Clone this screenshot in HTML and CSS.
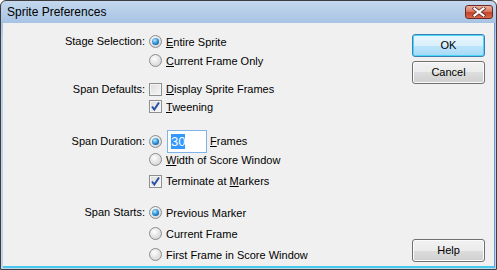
FILE: index.html
```html
<!DOCTYPE html>
<html>
<head>
    <title>Sprite Preferences</title>
    <link rel="stylesheet" href="styles.css">
</head>
<body>
    <div class="window">
        <div class="titlebar">
            <span class="title">Sprite Preferences</span>
            <div class="close">
                <svg width="14" height="10" viewBox="0 0 14 10">
                    <path d="M2.5 1.5 L11.5 8.5 M11.5 1.5 L2.5 8.5" stroke="#5a2a22" stroke-width="3.6" stroke-linecap="square"/>
                    <path d="M2.5 1.5 L11.5 8.5 M11.5 1.5 L2.5 8.5" stroke="#ffffff" stroke-width="2.2" stroke-linecap="square"/>
                </svg>
            </div>
        </div>

        <div class="client">
            <div class="fields">
                <div class="group stage">
                    <div class="label">Stage Selection:</div>
                    <div class="options">
                        <div class="opt h19"><span class="radio on"></span><span><u>E</u>ntire Sprite</span></div>
                        <div class="opt h19"><span class="radio"></span><span><u>C</u>urrent Frame Only</span></div>
                    </div>
                </div>

                <div class="group defaults">
                    <div class="label">Span Defaults:</div>
                    <div class="options">
                        <div class="opt h18"><span class="check"></span><span><u>D</u>isplay Sprite Frames</span></div>
                        <div class="opt h17">
                            <span class="check">
                                <svg width="11" height="11" viewBox="0 0 11 11"><path d="M2 5.5 L4.3 8.5 L9 1.5" fill="none" stroke="#2a4fa8" stroke-width="2"/></svg>
                            </span>
                            <span><u>T</u>weening</span>
                        </div>
                    </div>
                </div>

                <div class="group duration">
                    <div class="label">Span Duration:</div>
                    <div class="options">
                        <div class="opt h22">
                            <span class="radio on"></span>
                            <span class="input"><span class="sel">30</span></span>
                            <span><u>F</u>rames</span>
                        </div>
                        <div class="opt h15"><span class="radio"></span><span><u>W</u>idth of Score Window</span></div>
                        <div class="opt h18 gap5">
                            <span class="check">
                                <svg width="11" height="11" viewBox="0 0 11 11"><path d="M2 5.5 L4.3 8.5 L9 1.5" fill="none" stroke="#2a4fa8" stroke-width="2"/></svg>
                            </span>
                            <span>Terminate at <u>M</u>arkers</span>
                        </div>
                    </div>
                </div>

                <div class="group starts">
                    <div class="label">Span Starts:</div>
                    <div class="options">
                        <div class="opt h21"><span class="radio on"></span><span>Previous Marker</span></div>
                        <div class="opt h21"><span class="radio"></span><span>Current Frame</span></div>
                        <div class="opt h21"><span class="radio"></span><span>First Frame in Score Window</span></div>
                    </div>
                </div>
            </div>

            <div class="buttons">
                <div class="btn default">OK</div>
                <div class="btn">Cancel</div>
                <div class="spacer"></div>
                <div class="btn">Help</div>
            </div>
        </div>
    </div>
</body>
</html>
```

FILE: styles.css
```css
body {
    margin: 0;
    font-family: "Liberation Sans", Arial, sans-serif;
    font-size: 11px;
    color: #000;
    background-color: #fff;
}

.window {
    width: 495px;
    height: 268px;
    border: 1px solid #3d3d3d;
    border-radius: 6px 6px 0 0;
    background: linear-gradient(#c4d8ee, #a7c3e4 22px, #b9d0ea 40px, #bfd5ec);
    display: flex;
    flex-direction: column;
}

.titlebar {
    height: 22px;
    display: flex;
    justify-content: space-between;
    align-items: flex-start;
    padding: 0 3px 0 6px;
}

.title {
    font-size: 12px;
    line-height: 22px;
    color: #000;
}

.close {
    margin-top: 4px;
    width: 28px;
    height: 14px;
    border: 1px solid #6d2a20;
    border-radius: 3px;
    box-sizing: border-box;
    background: linear-gradient(#eab0a2, #d97a63 45%, #c4432b 55%, #d8694c);
    display: flex;
    align-items: center;
    justify-content: center;
}

.client {
    margin: 0 1px 0 2px;
    height: 243px;
    background-color: #f0f0f0;
    border-right: 1px solid #6b9ad0;
    border-bottom: 2px solid #48c8ec;
    display: flex;
}

.fields {
    padding-top: 9px;
}

.group {
    display: flex;
}

.label {
    width: 142px;
    text-align: right;
    line-height: 19px;
    margin-right: 4px;
    white-space: nowrap;
}

.defaults .label { line-height: 18px; }
.duration .label { line-height: 22px; }
.starts .label { line-height: 21px; }

.defaults { margin-top: 10px; }
.duration { margin-top: 15px; }
.starts { margin-top: 12px; }

.opt {
    display: flex;
    align-items: center;
    white-space: nowrap;
}

.h15 { height: 15px; }
.h17 { height: 17px; }
.h18 { height: 18px; }
.h19 { height: 19px; }
.h21 { height: 21px; }
.h22 { height: 22px; }
.gap5 { margin-top: 5px; }

.radio {
    width: 13px;
    height: 13px;
    box-sizing: border-box;
    border: 1px solid #8b8d8f;
    border-radius: 50%;
    background: radial-gradient(circle at 40% 35%, #ffffff, #e6e6e6 45%, #c9cbcd);
    margin-right: 4px;
    display: flex;
    align-items: center;
    justify-content: center;
    flex: none;
}

.radio.on::after {
    content: "";
    width: 7px;
    height: 7px;
    border-radius: 50%;
    background: radial-gradient(circle at 40% 35%, #b9ecff, #2a8fd6 50%, #0a3e7a);
}

.check {
    width: 13px;
    height: 13px;
    box-sizing: border-box;
    border: 1px solid #8e8f8f;
    background: linear-gradient(135deg, #dcdcdc, #f8f8f8);
    box-shadow: inset 0 0 0 1px #f4f4f4;
    margin-right: 4px;
    display: flex;
    align-items: center;
    justify-content: center;
    flex: none;
}

.input {
    width: 40px;
    height: 23px;
    box-sizing: border-box;
    border: 1px solid #7eb4ea;
    background-color: #fff;
    margin-left: 1px;
    margin-right: 3px;
    padding: 4px 0 0 3px;
    font-size: 13px;
    line-height: 14px;
}

.sel {
    background-color: #3399ff;
    color: #fff;
}

.buttons {
    margin-left: auto;
    margin-right: 9px;
    padding: 11px 0 4px;
    width: 73px;
    display: flex;
    flex-direction: column;
    gap: 4px;
}

.spacer {
    flex: 1;
}

.btn {
    height: 23px;
    box-sizing: border-box;
    border: 1px solid #707070;
    border-radius: 3px;
    background: linear-gradient(#f2f2f2, #ebebeb 50%, #dddddd 50%, #cfcfcf);
    box-shadow: inset 0 0 0 1px #fcfcfc;
    text-align: center;
    line-height: 21px;
    font-size: 11px;
}

.btn.default {
    border-color: #3c7fb1;
    background: linear-gradient(#eaf6fd, #d9f0fc 50%, #bee6fd 50%, #a7d9f5);
    box-shadow: inset 0 0 0 1px #48d8fb;
}
```
